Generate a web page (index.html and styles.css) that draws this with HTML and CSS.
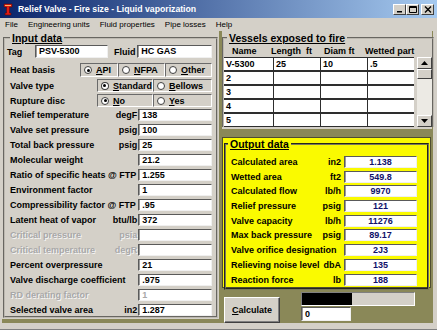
FILE: index.html
```html
<!DOCTYPE html>
<html lang="en">
<head>
    <meta charset="UTF-8">
    <title>Relief Valve - Fire size - Liquid vaporization</title>
    <link rel="stylesheet" href="styles.css">
</head>
<body>

<div class="window">

    <div class="titlebar">
        <svg class="app-icon" viewBox="0 0 12 13">
            <path d="M2 1h8v3H7.5v6H9v2H3v-2h1.5V4H2z" fill="#e01a14" stroke="#5a0a06" stroke-width="0.6"/>
            <path d="M3 2h6v1H3z" fill="#ffb060"/>
        </svg>
        <span class="title">Relief Valve - Fire size - Liquid vaporization</span>
        <span class="caption-buttons">
            <span class="cap-btn"><svg viewBox="0 0 8 7"><path d="M1 5h5v1.5H1z" fill="#000"/></svg></span>
            <span class="cap-btn"><svg viewBox="0 0 8 7"><path d="M0.5 0.5h7v6h-7z M0.5 1.5h7" fill="none" stroke="#000" stroke-width="1"/></svg></span>
            <span class="cap-btn close"><svg viewBox="0 0 8 7"><path d="M1 0.5l6 6M7 0.5l-6 6" stroke="#000" stroke-width="1.4"/></svg></span>
        </span>
    </div>

    <nav class="menubar">
        <span>File</span>
        <span>Engineering units</span>
        <span>Fluid properties</span>
        <span>Pipe losses</span>
        <span>Help</span>
    </nav>

    <main class="client">

        <section class="panel input-panel">
            <fieldset class="group">
                <legend>Input data</legend>

                <div class="tag-row">
                    <label class="tag-label">Tag</label>
                    <span class="field">PSV-5300</span>
                    <label class="fluid-label">Fluid</label>
                    <span class="field">HC GAS</span>
                </div>

                <div class="radio-row heat">
                    <label>Heat basis</label>
                    <span class="opt"><i class="radio on"></i><span><u>A</u>PI</span></span>
                    <span class="opt"><i class="radio"></i><span><u>N</u>FPA</span></span>
                    <span class="opt"><i class="radio"></i><span><u>O</u>ther</span></span>
                </div>

                <div class="radio-row pair">
                    <label>Valve type</label>
                    <span class="opt"><i class="radio on"></i><span><u>S</u>tandard</span></span>
                    <span class="opt"><i class="radio"></i><span><u>B</u>ellows</span></span>
                </div>

                <div class="radio-row pair">
                    <label>Rupture disc</label>
                    <span class="opt"><i class="radio on"></i><span><u>N</u>o</span></span>
                    <span class="opt"><i class="radio"></i><span><u>Y</u>es</span></span>
                </div>

                <div class="num-row"><label>Relief temperature</label><span class="unit">degF</span><span class="field">138</span></div>
                <div class="num-row"><label>Valve set pressure</label><span class="unit">psig</span><span class="field">100</span></div>
                <div class="num-row"><label>Total back pressure</label><span class="unit">psig</span><span class="field">25</span></div>
                <div class="num-row"><label>Molecular weight</label><span class="unit"></span><span class="field">21.2</span></div>
                <div class="num-row"><label>Ratio of specific heats @ FTP</label><span class="unit"></span><span class="field">1.255</span></div>
                <div class="num-row"><label>Environment factor</label><span class="unit"></span><span class="field">1</span></div>
                <div class="num-row"><label>Compressibility factor @ FTP</label><span class="unit"></span><span class="field">.95</span></div>
                <div class="num-row"><label>Latent heat of vapor</label><span class="unit">btu/lb</span><span class="field">372</span></div>
                <div class="num-row disabled"><label>Critical pressure</label><span class="unit">psia</span><span class="field"></span></div>
                <div class="num-row disabled"><label>Critical temperature</label><span class="unit">degR</span><span class="field"></span></div>
                <div class="num-row"><label>Percent overpressure</label><span class="unit"></span><span class="field">21</span></div>
                <div class="num-row"><label>Valve discharge coefficient</label><span class="unit"></span><span class="field">.975</span></div>
                <div class="num-row disabled"><label>RD derating factor</label><span class="unit"></span><span class="field">1</span></div>
                <div class="num-row"><label>Selected valve area</label><span class="unit">in2</span><span class="field">1.287</span></div>
            </fieldset>
        </section>

        <div class="right-col">

            <section class="panel vessels-panel">
                <fieldset class="group vessels">
                    <legend>Vessels exposed to fire</legend>

                    <div class="vessel-head">
                        <span>Name</span>
                        <span>Length&nbsp; ft</span>
                        <span>Diam ft</span>
                        <span>Wetted part</span>
                    </div>

                    <div class="vessel-body">
                        <div class="vessel-grid">
                            <span>V-5300</span><span>25</span><span>10</span><span>.5</span>
                            <span>2</span><span></span><span></span><span></span>
                            <span>3</span><span></span><span></span><span></span>
                            <span>4</span><span></span><span></span><span></span>
                            <span>5</span><span></span><span></span><span></span>
                        </div>
                        <div class="scrollbar">
                            <span class="sb-btn"><svg viewBox="0 0 7 4"><path d="M3.5 0L7 4H0z" fill="#000"/></svg></span>
                            <span class="sb-thumb"></span>
                            <span class="sb-track"></span>
                            <span class="sb-btn"><svg viewBox="0 0 7 4"><path d="M0 0h7L3.5 4z" fill="#000"/></svg></span>
                        </div>
                    </div>
                </fieldset>
            </section>

            <section class="output-panel">
                <fieldset class="group output">
                    <legend>Output data</legend>
                    <div class="out-row"><label>Calculated area</label><span class="unit">in2</span><span class="field">1.138</span></div>
                    <div class="out-row"><label>Wetted area</label><span class="unit">ft2</span><span class="field">549.8</span></div>
                    <div class="out-row"><label>Calculated flow</label><span class="unit">lb/h</span><span class="field">9970</span></div>
                    <div class="out-row"><label>Relief pressure</label><span class="unit">psig</span><span class="field">121</span></div>
                    <div class="out-row"><label>Valve capacity</label><span class="unit">lb/h</span><span class="field">11276</span></div>
                    <div class="out-row"><label>Max back pressure</label><span class="unit">psig</span><span class="field">89.17</span></div>
                    <div class="out-row"><label>Valve orifice designation</label><span class="unit"></span><span class="field">2J3</span></div>
                    <div class="out-row"><label>Relieving noise level</label><span class="unit">dbA</span><span class="field">135</span></div>
                    <div class="out-row"><label>Reaction force</label><span class="unit">lb</span><span class="field">188</span></div>
                </fieldset>
            </section>

            <div class="actions">
                <button class="calc-btn"><u>C</u>alculate</button>
                <div class="progress-block">
                    <div class="progress"><span class="progress-fill" style="width: 50px"></span></div>
                    <span class="field counter">0</span>
                </div>
            </div>

        </div>

    </main>

</div>

</body>
</html>
```

FILE: styles.css
```css
* {
    box-sizing: border-box;
}

body {
    margin: 0;
    font-family: "Liberation Sans", Arial, sans-serif;
    font-size: 9px;
    font-weight: bold;
    color: #000;
    background-color: #d4d0c8;
}

.window {
    width: 437px;
    height: 330px;
    display: flex;
    flex-direction: column;
    background-color: #d4d0c8;
    border-bottom: 1px solid #808080;
}

/* title bar */

.titlebar {
    height: 18px;
    display: flex;
    align-items: center;
    padding: 0 3px 0 2px;
    background: linear-gradient(to right, #0a246a, #a6caf0);
    color: white;
    font-size: 8.7px;
}

.app-icon {
    width: 12px;
    height: 13px;
    margin-right: 4px;
}

.title {
    flex: 1;
}

.caption-buttons {
    display: flex;
}

.cap-btn {
    width: 13px;
    height: 11px;
    display: flex;
    align-items: center;
    justify-content: center;
    background-color: #d4d0c8;
    border: 1px solid;
    border-color: #fff #404040 #404040 #fff;
}

.cap-btn svg {
    width: 8px;
    height: 7px;
}

.cap-btn.close {
    margin-left: 2px;
}

/* menu */

.menubar {
    height: 13px;
    display: flex;
    align-items: center;
    gap: 10px;
    padding-left: 5px;
    font-size: 8px;
    font-weight: normal;
}

/* client area */

.client {
    height: 292px;
    display: flex;
    gap: 3px;
    margin: 0 4px 0 2px;
    background-color: #8a8858;
}

.panel {
    background-color: #d4d0c8;
}

.group {
    margin: 1px 1px 0;
    border: 2px groove #bcb8b0;
}

legend {
    padding: 0 2px;
    font-size: 10.5px;
    line-height: 12px;
    text-decoration: underline;
}

label {
    white-space: nowrap;
}

.field {
    display: block;
    height: 12px;
    padding-left: 3px;
    line-height: 10px;
    white-space: nowrap;
    background-color: #fff;
    border: 1px solid;
    border-color: #5a5a5a #f0f0f0 #f0f0f0 #5a5a5a;
    box-shadow: inset 1px 0 0 #9a9a9a;
}

.unit {
    text-align: right;
}

/* input data */

.input-panel {
    width: 217px;
    height: 288px;
}

.input-panel .group {
    padding: 1px 4px 0 5px;
}

.tag-row {
    display: grid;
    grid-template-columns: 25px 73px 1fr 75px;
    align-items: center;
    height: 13px;
    margin-bottom: 5px;
}

.tag-row .field {
    height: 13px;
    line-height: 11px;
}

.tag-label {
    margin-left: -3px;
}

.fluid-label {
    padding-left: 6px;
}

.radio-row {
    display: grid;
    align-items: stretch;
    height: 13px;
    margin-bottom: 2px;
}

.radio-row label {
    align-self: center;
}

.radio-row.heat {
    grid-template-columns: 70px 38px 47px 47px;
    height: 14px;
}

.radio-row.pair {
    grid-template-columns: 87px 56px 59px;
}

.opt {
    display: flex;
    align-items: center;
    gap: 4px;
    padding-left: 3px;
    border: 1px solid;
    border-color: #6a6a6a #fff #fff #6a6a6a;
}

.radio {
    width: 8px;
    height: 8px;
    border-radius: 50%;
    border: 1px solid #404040;
    background-color: #fff;
    display: flex;
    align-items: center;
    justify-content: center;
}

.radio.on::after {
    content: "";
    width: 3px;
    height: 3px;
    border-radius: 50%;
    background-color: #000;
}

.num-row {
    display: grid;
    grid-template-columns: 1fr auto 74px;
    column-gap: 1px;
    align-items: center;
    height: 12px;
    margin-bottom: 3px;
}

.num-row:last-child {
    margin-bottom: 0;
}

.disabled label,
.disabled .unit,
.disabled .field {
    color: #a8a8a8;
}

.disabled label,
.disabled .unit {
    text-shadow: 1px 1px 0 #f4f4f4;
}

/* vessels */

.right-col {
    width: 210px;
    display: flex;
    flex-direction: column;
}

.vessels-panel {
    height: 98px;
}

.group.vessels {
    margin: 1px 0 0;
    padding: 2px 0 0 0;
    border-bottom: none;
}

.vessels legend {
    margin-left: 3px;
}

.vessel-head {
    display: grid;
    grid-template-columns: 49px 46px 46px 51px;
    height: 11px;
    line-height: 11px;
}

.vessel-head span:nth-child(1) {
    padding-left: 8px;
}

.vessel-head span:nth-child(2) {
    margin-left: -2px;
}

.vessel-head span:nth-child(3) {
    padding-left: 5px;
}

.vessel-head span:nth-child(4) {
    white-space: nowrap;
}

.vessel-body {
    display: flex;
    gap: 3px;
}

.vessel-grid {
    width: 190px;
    display: grid;
    grid-template-columns: 49px 46px 46px 46px;
    grid-auto-rows: 12px;
    gap: 2px 1px;
    padding: 1px 0;
    background-color: #2e2e2e;
}

.vessel-grid span {
    padding-left: 2px;
    line-height: 12px;
    background-color: #fff;
}

.scrollbar {
    width: 15px;
    display: flex;
    flex-direction: column;
    background-color: #eceae4;
}

.sb-btn,
.sb-thumb {
    display: flex;
    align-items: center;
    justify-content: center;
    background-color: #d4d0c8;
    border: 1px solid;
    border-color: #fff #404040 #404040 #fff;
}

.sb-btn {
    height: 12px;
}

.sb-btn svg {
    width: 7px;
    height: 4px;
}

.sb-thumb {
    height: 10px;
}

.sb-track {
    flex: 1;
}

/* output */

.output-panel {
    width: 209px;
    height: 151px;
    margin-top: 8px;
    background-color: #fafa00;
    border: 1px solid #4e4c30;
}

.group.output {
    margin: 0 1px;
    padding: 6px 10px 0 5px;
    border-color: #7a7a5a;
}

.output legend {
    margin-left: -3px;
}

.out-row {
    display: grid;
    grid-template-columns: 1fr auto 73px;
    column-gap: 3px;
    align-items: center;
    height: 12px;
    margin-bottom: 2.7px;
}

.out-row .field {
    text-align: center;
    padding-left: 0;
    color: #10106a;
}

/* bottom controls */

.actions {
    flex: 1;
    display: flex;
    align-items: flex-start;
}

.calc-btn {
    width: 56px;
    height: 26px;
    margin: 9px 0 0 2px;
    padding: 0;
    font-family: inherit;
    font-size: 9px;
    font-weight: bold;
    color: #000;
    background-color: #d4d0c8;
    border: 1px solid;
    border-color: #fff #404040 #404040 #fff;
    box-shadow: inset -1px -1px 0 #808080;
}

.progress-block {
    margin: 4px 0 0 21px;
}

.progress {
    width: 114px;
    height: 14px;
    display: flex;
    background-color: #d4d0c8;
    border: 1px solid;
    border-color: #808080 #fff #fff #808080;
}

.progress-fill {
    background-color: #000;
}

.counter {
    width: 50px;
    height: 14px;
    margin-top: 1px;
    line-height: 12px;
}
```
